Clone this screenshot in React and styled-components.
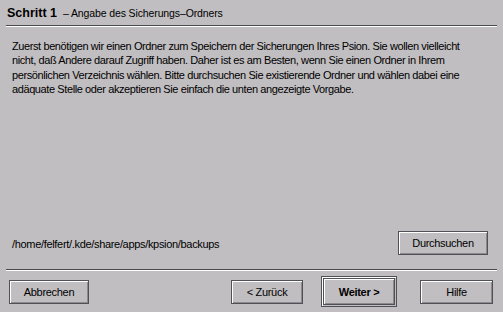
import React from "react";
import styled, { createGlobalStyle } from "styled-components";

const GlobalStyle = createGlobalStyle`
  html, body {
    margin: 0;
    padding: 0;
    background: #c1bec1;
  }
`;

const lines = [
  "Zuerst benötigen wir einen Ordner zum Speichern der Sicherungen Ihres Psion. Sie wollen vielleicht",
  "nicht, daß Andere darauf Zugriff haben. Daher ist es am Besten, wenn Sie einen Ordner in Ihrem",
  "persönlichen Verzeichnis wählen. Bitte durchsuchen Sie existierende Ordner und wählen dabei eine",
  "adäquate Stelle oder akzeptieren Sie einfach die unten angezeigte Vorgabe.",
];

const App = () => {
  return (
    <Root>
      <GlobalStyle />
      <Header>
        <StepLabel>Schritt 1</StepLabel>
        <StepTitle>– Angabe des Sicherungs–Ordners</StepTitle>
      </Header>
      <Separator />
      <Description>
        {lines.map((l) => (
          <Line key={l}>{l}</Line>
        ))}
      </Description>
      <PathRow>
        <PathText>/home/felfert/.kde/share/apps/kpsion/backups</PathText>
        <Button $w={90}>Durchsuchen</Button>
      </PathRow>
      <Separator />
      <ButtonRow>
        <Button $w={80}>Abbrechen</Button>
        <NavGroup>
          <Button $w={72}>&lt; Zurück</Button>
          <DefaultFrame>
            <Button $w={72} $h={27} $bold>
              Weiter &gt;
            </Button>
          </DefaultFrame>
          <Button $w={73}>Hilfe</Button>
        </NavGroup>
      </ButtonRow>
    </Root>
  );
};

export default App;

const Root = styled.div`
  width: 503px;
  height: 312px;
  display: flex;
  flex-direction: column;
  background: #c1bec1;
  color: #000;
  font-family: "Liberation Sans", Helvetica, Arial, sans-serif;
  overflow: hidden;
`;

const Header = styled.div`
  display: flex;
  align-items: baseline;
  gap: 6px;
  height: 25px;
  padding: 6px 7px 0;
  box-sizing: border-box;
`;

const StepLabel = styled.span`
  font-size: 12.5px;
  font-weight: bold;
`;

const StepTitle = styled.span`
  font-size: 10.5px;
  letter-spacing: -0.12px;
`;

const Separator = styled.div`
  margin: 0 6px;
  height: 0;
  border-top: 1px solid #4a4a52;
  border-bottom: 1px solid #fff;
`;

const Description = styled.div`
  padding: 12px 12px 0;
  font-size: 11px;
  letter-spacing: -0.4px;
  line-height: 14.33px;
  flex: 1;
`;

const Line = styled.div`
  white-space: nowrap;
`;

const PathRow = styled.div`
  display: flex;
  align-items: center;
  justify-content: space-between;
  padding: 0 15px 14px 12px;
`;

const PathText = styled.span`
  font-size: 11px;
  letter-spacing: -0.32px;
  padding-top: 2px;
`;

const Button = styled.div`
  width: ${(p) => p.$w}px;
  height: ${(p) => p.$h || 24}px;
  box-sizing: border-box;
  display: flex;
  align-items: center;
  justify-content: center;
  font-size: 11px;
  letter-spacing: -0.3px;
  font-weight: ${(p) => (p.$bold ? "bold" : "normal")};
  border: 1px solid #505058;
  box-shadow: inset 1px 1px #fff, inset -1px -1px #8c8a8c;
  background: #c1bec1;
`;

const ButtonRow = styled.div`
  display: flex;
  align-items: center;
  justify-content: space-between;
  height: 41px;
  padding: 0 10px 0 9px;
`;

const NavGroup = styled.div`
  display: flex;
  align-items: center;

  & > *:nth-child(2) {
    margin-left: 18px;
    margin-right: 23px;
  }
`;

const DefaultFrame = styled.div`
  border: 1px solid #505058;
  padding: 1px;
  box-shadow: inset 1px 1px #fff;
`;
